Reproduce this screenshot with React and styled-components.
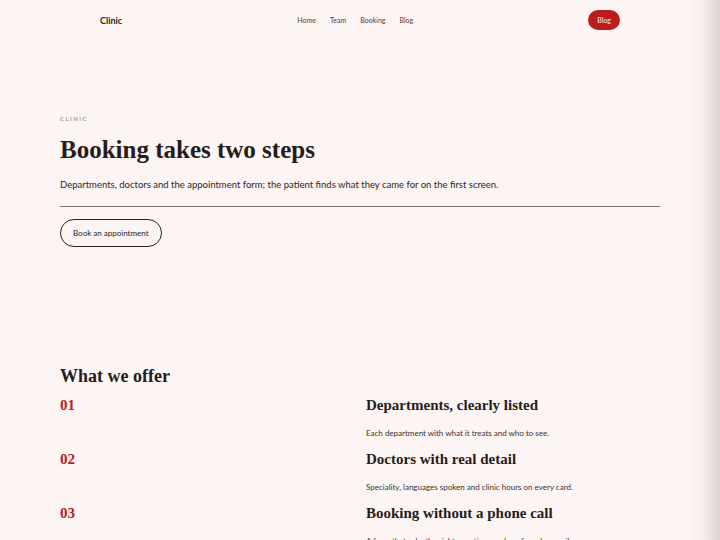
import React from "react";
import styled, { createGlobalStyle } from "styled-components";

const Global = createGlobalStyle`
  html, body { margin: 0; padding: 0; }
  html {
    background: linear-gradient(to right, #fdf5f3 0, #fdf5f3 calc(100% - 30px), #f6efec calc(100% - 18px), #ddd5d2 100%);
    min-height: 100%;
  }
  body {
    font-family: Lato, "Liberation Sans", sans-serif;
    color: #2a2020;
  }
`;

const Page = styled.div`
  width: 600px;
  margin: 0 auto 0 60px;
`;

const Nav = styled.nav`
  height: 40px;
  padding: 0 40px;
  display: flex;
  align-items: center;
  justify-content: space-between;
`;

const Brand = styled.div`
  font-size: 9px;
  font-weight: 700;
  color: #2b2222;
`;

const Links = styled.div`
  display: flex;
  gap: 14px;
  font-size: 7px;
  color: #4b4040;
`;

const Pill = styled.a`
  display: inline-flex;
  align-items: center;
  height: 20px;
  padding: 0 9px;
  border-radius: 10px;
  background: #b91c1c;
  color: #fbe9e7;
  font-size: 7px;
`;

const Hero = styled.header`
  padding-top: 75px;
`;

const Eyebrow = styled.div`
  font-size: 6px;
  letter-spacing: 1.5px;
  color: #7a6f6f;
  text-transform: uppercase;
  line-height: 8px;
`;

const Title = styled.h1`
  margin: 12px 0 0;
  font-family: "Liberation Serif", serif;
  font-size: 25px;
  line-height: 30px;
  font-weight: 700;
  color: #261c1c;
`;

const Lead = styled.p`
  margin: 14px 0 0;
  font-size: 9.5px;
  line-height: 12px;
  color: #2e2424;
`;

const Rule = styled.hr`
  margin: 15px 0 0;
  border: 0;
  border-top: 1px solid #7b7373;
`;

const OutlineButton = styled.a`
  margin-top: 12px;
  display: inline-flex;
  align-items: center;
  height: 26px;
  padding: 0 12px;
  border: 1px solid #2b2222;
  border-radius: 14px;
  font-size: 8px;
  color: #2b2222;
`;

const Offer = styled.section`
  padding-top: 118px;
`;

const SectionTitle = styled.h2`
  margin: 0;
  font-family: "Liberation Serif", serif;
  font-size: 18px;
  line-height: 22px;
  font-weight: 700;
  color: #261c1c;
`;

const Grid = styled.div`
  margin-top: 9px;
  display: grid;
  grid-template-columns: 1fr 1fr;
  column-gap: 12px;
`;

const Num = styled.div`
  font-family: "Liberation Serif", serif;
  font-size: 15px;
  font-weight: 700;
  line-height: 18px;
  color: #b32121;
`;

const Item = styled.div`
  height: 54px;
`;

const ItemTitle = styled.div`
  font-family: "Liberation Serif", serif;
  font-size: 15px;
  font-weight: 700;
  line-height: 18px;
  color: #261c1c;
`;

const ItemText = styled.div`
  margin-top: 14px;
  font-size: 8px;
  line-height: 10px;
  color: #3a3030;
`;

const items = [
  ["01", "Departments, clearly listed", "Each department with what it treats and who to see."],
  ["02", "Doctors with real detail", "Speciality, languages spoken and clinic hours on every card."],
  ["03", "Booking without a phone call", "A form that asks the right questions and confirms by email."],
];

export default function App() {
  return (
    <>
      <Global />
      <Page>
        <Nav>
          <Brand>Clinic</Brand>
          <Links>
            <span>Home</span>
            <span>Team</span>
            <span>Booking</span>
            <span>Blog</span>
          </Links>
          <Pill>Blog</Pill>
        </Nav>
        <Hero>
          <Eyebrow>Clinic</Eyebrow>
          <Title>Booking takes two steps</Title>
          <Lead>Departments, doctors and the appointment form; the patient finds what they came for on the first screen.</Lead>
          <Rule />
          <OutlineButton>Book an appointment</OutlineButton>
        </Hero>
        <Offer>
          <SectionTitle>What we offer</SectionTitle>
          <Grid>
            {items.map(([n, t, d]) => (
              <React.Fragment key={n}>
                <Item><Num>{n}</Num></Item>
                <Item>
                  <ItemTitle>{t}</ItemTitle>
                  <ItemText>{d}</ItemText>
                </Item>
              </React.Fragment>
            ))}
          </Grid>
        </Offer>
      </Page>
    </>
  );
}
